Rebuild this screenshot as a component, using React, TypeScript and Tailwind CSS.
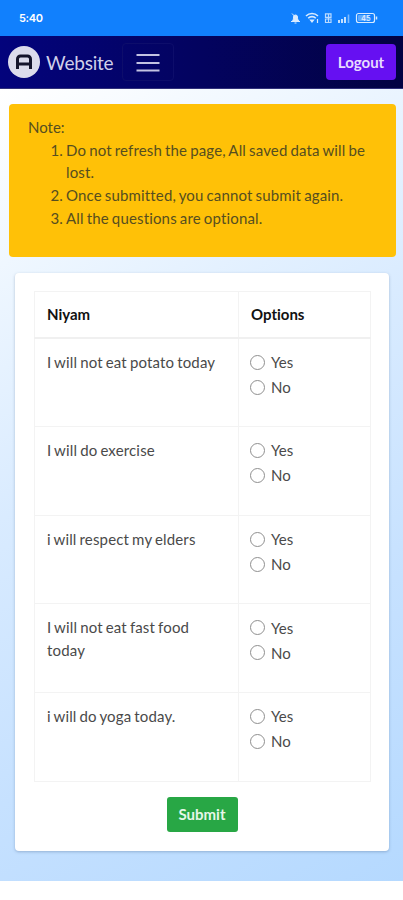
import { useState } from 'react';

type Answer = 'yes' | 'no';

interface Niyam {
  id: number;
  text: string;
}

const niyams: Niyam[] = [
  { id: 1, text: 'I will not eat potato today' },
  { id: 2, text: 'I will do exercise' },
  { id: 3, text: 'i will respect my elders' },
  { id: 4, text: 'I will not eat fast food today' },
  { id: 5, text: 'i will do yoga today.' },
];

const StatusBar = () => (
  <div className="flex h-9 items-center justify-between bg-[#1180fd] pr-[25px] pl-[19px] text-white">
    <span className="font-['Inter',sans-serif] text-[11px] font-semibold tracking-[-0.3px]">5:40</span>
    <svg width="88" height="12" viewBox="0 0 88 12" fill="none" stroke="#d8eaff">
      {/* muted bell */}
      <path d="M2.5 8.5c1-1 1-2 1-3.5a2 2 0 0 1 4 0c0 1.5 0 2.5 1 3.5z" fill="#d8eaff" />
      <path d="M1 9.500h9M4.500 11h2M2 1.500l7.500 8" strokeWidth="1" />
      {/* wifi */}
      <path d="M16 4a8.500 8.500 0 0 1 12 0M18.200 6.200a5.300 5.300 0 0 1 7.600 0" strokeWidth="1.600" />
      <path d="M20.500 8h3l-1.500 2zM27.500 7v4" fill="#d8eaff" strokeWidth="1.200" />
      {/* data */}
      <path d="M35.500 1.800h5.500v3.500h-5.500zM35.500 7h5.500v3.500h-5.500zM38.500 2v8" strokeWidth="1.200" opacity="0.850" />
      {/* signal */}
      <path d="M49 8v3M52 7v4M55 5v6" strokeWidth="1.800" />
      <path d="M58.500 2.500v8.500" strokeWidth="1.600" opacity="0.550" />
      {/* battery */}
      <rect x="66.500" y="1.500" width="18" height="9" rx="2" strokeWidth="1.200" />
      <path d="M86.500 4.500v3" strokeWidth="1.500" />
      <rect x="68" y="3" width="11" height="6" rx="1" fill="#a9d2ff" stroke="none" opacity="0.500" />
      <text x="71" y="8.600" fill="#e6f1ff" stroke="none" fontSize="7.500" fontWeight="500" fontFamily="Inter, sans-serif">45</text>
    </svg>
  </div>
);

const Navbar = () => (
  <nav className="flex h-[53px] items-center border-b border-[#30307a] bg-linear-to-r from-[#03037c] via-[#03035f] to-[#020242] pr-[7px] pl-2">
    <svg width="32" height="32" viewBox="0 0 32 32">
      <circle cx="16" cy="16" r="16" fill="#dcdcec" />
      <path
        d="M9.500 23V13a3 3 0 0 1 3-3h7a3 3 0 0 1 3 3v10M9.500 18h13"
        fill="none"
        stroke="#15152c"
        strokeWidth="3"
      />
    </svg>
    <span className="ml-[6px] w-[76px] pt-px text-[19px] leading-none tracking-[-0.2px] whitespace-nowrap text-[#d0d0ea]">
      Website
    </span>
    <button
      aria-label="Menu"
      className="flex h-[38px] w-[52px] items-center justify-center rounded border border-[#0d0d6b]"
    >
      <svg width="24" height="20" viewBox="0 0 24 20" stroke="#c3c3e2" strokeWidth="2">
        <path d="M0.500 3h23M0.500 11h23M0.500 18.500h23" />
      </svg>
    </button>
    <button className="ml-auto h-9 w-[70px] rounded-[4px] bg-[#6610f2] text-[15px] font-bold text-[#e8dcff]">
      Logout
    </button>
  </nav>
);

interface RadioProps {
  name: string;
  label: string;
  checked: boolean;
  onChange: () => void;
}

const Radio = ({ name, label, checked, onChange }: RadioProps) => (
  <label className="flex h-[25px] items-center gap-[6px]">
    <input
      type="radio"
      name={name}
      checked={checked}
      onChange={onChange}
      className="size-[15px] appearance-none rounded-full border border-[#8f8f8f] bg-white checked:border-[5px] checked:border-blue-600"
    />
    {label}
  </label>
);

export default function App() {
  const [answers, setAnswers] = useState<Record<number, Answer>>({});

  const handleSelect = (id: number, answer: Answer) => {
    setAnswers((prev) => ({ ...prev, [id]: answer }));
  };

  return (
    <div className="h-[900px] w-[403px] overflow-hidden bg-white font-['Lato',sans-serif] text-[15px] leading-[22.700px] text-[#4a4a4a] [font-variant-ligatures:none]">
      <StatusBar />
      <Navbar />
      <main className="h-[792px] bg-linear-[150deg,#ffffff_0%,#f1f8ff_15%,#d9ebff_42%,#c6e1ff_70%,#b5d9ff_100%] pt-[15px]">
        <section className="mr-[7px] ml-[9px] h-[153px] rounded-[4px] bg-[#ffc107] pt-[12px] pr-5 pl-[19px] text-[#564e20]">
          <p>Note:</p>
          <ol className="list-decimal pl-[38px] tracking-[0.160px] [word-spacing:-1px]">
            <li>Do not refresh the page, All saved data will be lost.</li>
            <li>Once submitted, you cannot submit again.</li>
            <li>All the questions are optional.</li>
          </ol>
        </section>

        <section className="mt-4 mr-[14px] ml-[15px] h-[578px] rounded-[4px] bg-white px-[19px] pt-[18px] shadow-[0_1px_3px_rgba(60,90,130,0.350)]">
          <table className="h-[490px] w-[337px] table-fixed border-collapse border border-[#f3f3f3]">
            <thead>
              <tr className="h-[46px] border-b-2 border-[#f0f0f0] text-left text-[#111]">
                <th className="w-[204px] border-r border-[#f3f3f3] px-3 font-bold">Niyam</th>
                <th className="px-3 font-bold">Options</th>
              </tr>
            </thead>
            <tbody>
              {niyams.map(({ id, text }) => (
                <tr key={id} className="h-[88.800px] border-b border-[#f3f3f3] align-top">
                  <td className="border-r border-[#f3f3f3] pt-[12px] pr-5 pl-3 tracking-[0.160px] [word-spacing:-1px]">
                    {text}
                  </td>
                  <td className="pt-[11px] pr-3 pl-[11px]">
                    <Radio
                      name={`niyam-${id}`}
                      label="Yes"
                      checked={answers[id] === 'yes'}
                      onChange={() => handleSelect(id, 'yes')}
                    />
                    <Radio
                      name={`niyam-${id}`}
                      label="No"
                      checked={answers[id] === 'no'}
                      onChange={() => handleSelect(id, 'no')}
                    />
                  </td>
                </tr>
              ))}
            </tbody>
          </table>
          <div className="flex justify-center pt-[15px]">
            <button className="h-[35px] w-[71px] rounded-[3px] bg-[#28a745] text-[15px] font-bold text-[#e6f7e9]">
              Submit
            </button>
          </div>
        </section>
      </main>
    </div>
  );
}
